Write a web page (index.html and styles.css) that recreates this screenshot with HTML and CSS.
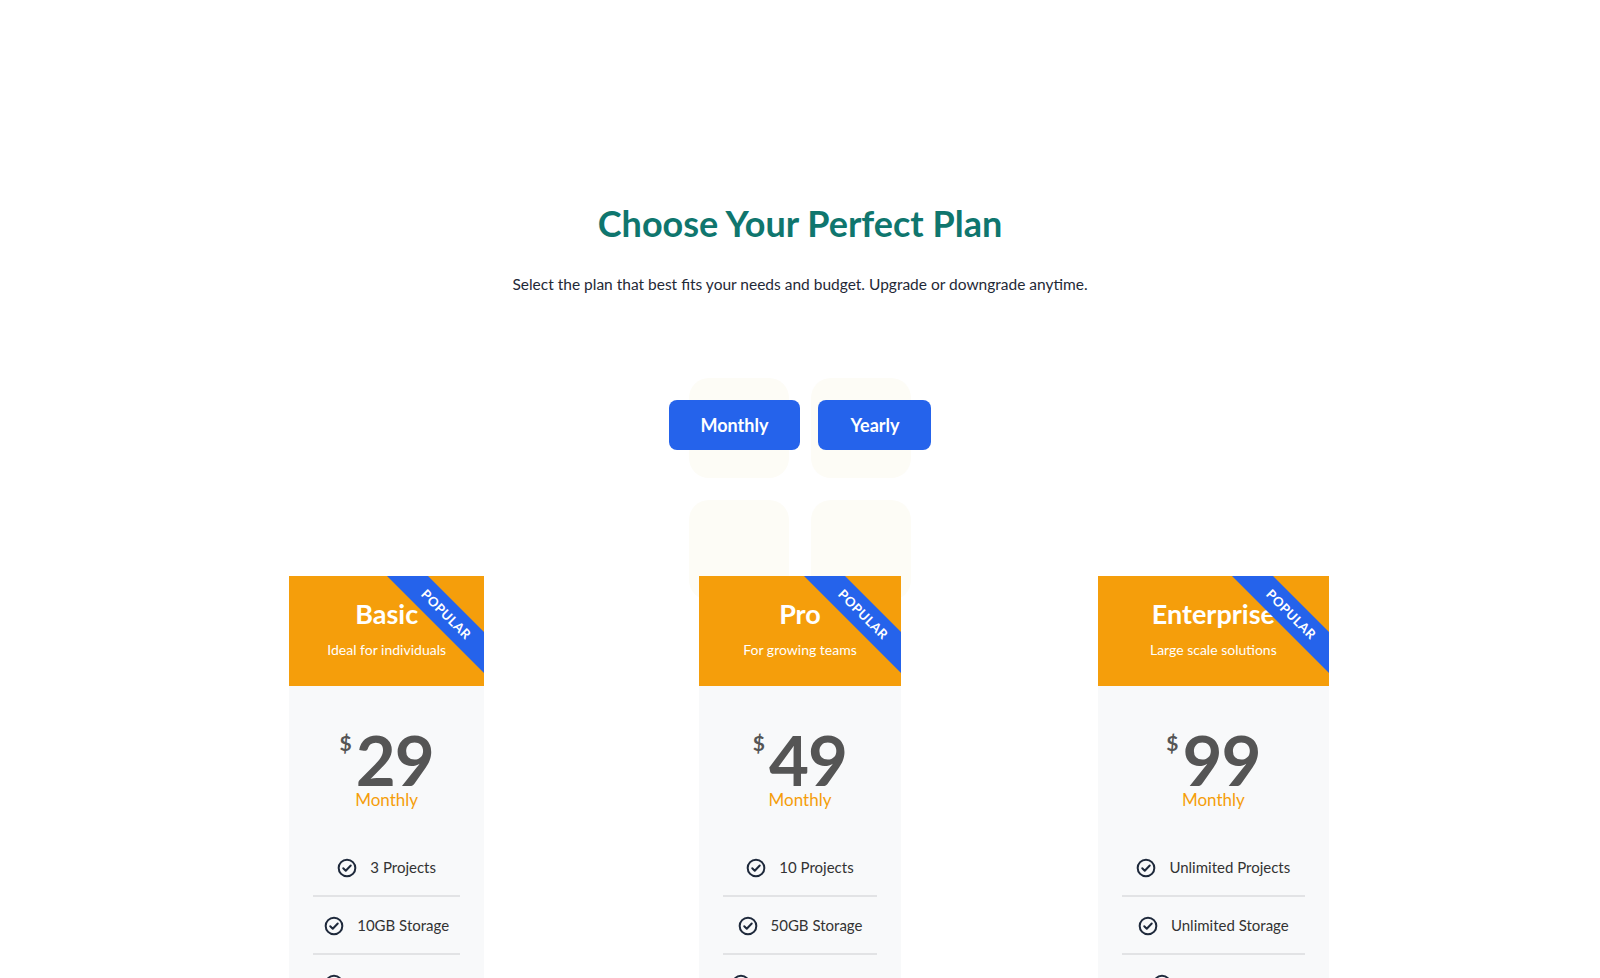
FILE: index.html
```html
<!DOCTYPE html>
<html lang="en">
<head>
    <meta charset="UTF-8">
    <meta name="viewport" content="width=device-width, initial-scale=1.0">
    <title>Pricing Plans</title>
    <link rel="stylesheet" href="styles.css">
</head>
<body>
    <section class="pricing">
        <h1 class="pricing-title">Choose Your Perfect Plan</h1>
        <p class="pricing-subtitle">Select the plan that best fits your needs and budget. Upgrade or downgrade anytime.</p>

        <div class="toggle-area">
            <div class="ghost-grid">
                <span></span><span></span><span></span><span></span>
            </div>
            <button class="toggle-btn">Monthly</button>
            <button class="toggle-btn">Yearly</button>
        </div>

        <div class="plans">
            <div class="plan plan-basic">
                <div class="plan-header">
                    <div class="ribbon">Popular</div>
                    <h2 class="plan-name">Basic</h2>
                    <p class="plan-desc">Ideal for individuals</p>
                </div>
                <div class="plan-body">
                    <div class="price"><span class="currency">$</span><span class="amount">29</span></div>
                    <div class="period">Monthly</div>
                    <ul class="features">
                        <li><svg viewBox="0 0 24 24"><circle cx="12" cy="12" r="10"/><path d="M7.5 12.3l3 3 6-6.3"/></svg>3 Projects</li>
                        <li><svg viewBox="0 0 24 24"><circle cx="12" cy="12" r="10"/><path d="M7.5 12.3l3 3 6-6.3"/></svg>10GB Storage</li>
                        <li><svg viewBox="0 0 24 24"><circle cx="12" cy="12" r="10"/><path d="M7.5 12.3l3 3 6-6.3"/></svg>Email Support</li>
                    </ul>
                </div>
            </div>

            <div class="plan plan-pro">
                <div class="plan-header">
                    <div class="ribbon">Popular</div>
                    <h2 class="plan-name">Pro</h2>
                    <p class="plan-desc">For growing teams</p>
                </div>
                <div class="plan-body">
                    <div class="price"><span class="currency">$</span><span class="amount">49</span></div>
                    <div class="period">Monthly</div>
                    <ul class="features">
                        <li><svg viewBox="0 0 24 24"><circle cx="12" cy="12" r="10"/><path d="M7.5 12.3l3 3 6-6.3"/></svg>10 Projects</li>
                        <li><svg viewBox="0 0 24 24"><circle cx="12" cy="12" r="10"/><path d="M7.5 12.3l3 3 6-6.3"/></svg>50GB Storage</li>
                        <li><svg viewBox="0 0 24 24"><circle cx="12" cy="12" r="10"/><path d="M7.5 12.3l3 3 6-6.3"/></svg>Priority Support</li>
                    </ul>
                </div>
            </div>

            <div class="plan plan-enterprise">
                <div class="plan-header">
                    <div class="ribbon">Popular</div>
                    <h2 class="plan-name">Enterprise</h2>
                    <p class="plan-desc">Large scale solutions</p>
                </div>
                <div class="plan-body">
                    <div class="price"><span class="currency">$</span><span class="amount">99</span></div>
                    <div class="period">Monthly</div>
                    <ul class="features">
                        <li><svg viewBox="0 0 24 24"><circle cx="12" cy="12" r="10"/><path d="M7.5 12.3l3 3 6-6.3"/></svg>Unlimited Projects</li>
                        <li><svg viewBox="0 0 24 24"><circle cx="12" cy="12" r="10"/><path d="M7.5 12.3l3 3 6-6.3"/></svg>Unlimited Storage</li>
                        <li><svg viewBox="0 0 24 24"><circle cx="12" cy="12" r="10"/><path d="M7.5 12.3l3 3 6-6.3"/></svg>24/7 Support</li>
                    </ul>
                </div>
            </div>
        </div>
    </section>
</body>
</html>
```

FILE: styles.css
```css
body {
    margin: 0;
    font-family: "Lato", "Noto Sans", sans-serif;
    background: #ffffff;
    color: #1f2937;
}

.pricing {
    padding-top: 202px;
    text-align: center;
}

.pricing-title {
    margin: 0;
    font-size: 36px;
    line-height: 1.2;
    font-weight: 700;
    color: #0f766e;
}

.pricing-subtitle {
    margin: 27px 0 0;
    font-size: 15.5px;
    line-height: 24px;
    color: #1f2937;
}

/* billing toggle */
.toggle-area {
    position: relative;
    display: flex;
    justify-content: center;
    gap: 18px;
    margin-top: 104px;
}

.ghost-grid {
    position: absolute;
    top: -22px;
    left: 50%;
    transform: translateX(-50%);
    display: grid;
    grid-template-columns: repeat(2, 100px);
    grid-auto-rows: 100px;
    gap: 22px;
    z-index: 0;
}

.ghost-grid span {
    background: #fdfcf6;
    border-radius: 20px;
}

.toggle-btn {
    position: relative;
    z-index: 1;
    height: 50px;
    padding: 0 32px;
    border: none;
    border-radius: 8px;
    background: #2563eb;
    color: #ffffff;
    font-family: inherit;
    font-size: 18px;
    font-weight: 700;
    cursor: pointer;
}

/* plan cards */
.plans {
    display: grid;
    grid-template-columns: repeat(3, 1fr);
    justify-items: center;
    align-items: start;
    width: 1240px;
    margin: 126px auto 0;
}

.plan {
    position: relative;
    z-index: 1;
    background: #f8f9fa;
}

.plan-basic { width: 195px; }
.plan-pro { width: 202px; }
.plan-enterprise { width: 231px; }

.plan-header {
    position: relative;
    overflow: hidden;
    height: 110px;
    box-sizing: border-box;
    padding: 22px 12px 0;
    background: #f59e0b;
    color: #ffffff;
}

.plan-name {
    margin: 0;
    font-size: 27px;
    line-height: 1.2;
    font-weight: 700;
}

.plan-desc {
    margin: 9px 0 0;
    font-size: 14px;
    line-height: 1.4;
}

.ribbon {
    position: absolute;
    top: 24px;
    right: -37px;
    width: 150px;
    height: 29px;
    line-height: 29px;
    background: #2563eb;
    color: #ffffff;
    font-size: 13px;
    font-weight: 700;
    letter-spacing: 0.5px;
    text-transform: uppercase;
    transform: rotate(45deg);
}

.plan-body {
    padding: 43px 24px 24px;
}

.price {
    display: flex;
    justify-content: center;
    align-items: flex-start;
    color: #555555;
}

.currency {
    font-size: 21px;
    line-height: 1;
    font-weight: 700;
    margin-top: 3px;
    margin-right: 4px;
}

.amount {
    font-size: 69px;
    line-height: 0.9;
    font-weight: 700;
    letter-spacing: -1px;
}

.period {
    margin-top: -2px;
    font-size: 17px;
    line-height: 22px;
    color: #f59e0b;
}

.features {
    list-style: none;
    margin: 28px 0 0;
    padding: 0;
}

.features li {
    display: flex;
    justify-content: center;
    align-items: center;
    padding: 16px 8px 15px;
    border-bottom: 2px solid #e2e3e5;
    font-size: 15px;
    line-height: 25px;
    color: #333333;
}

.features svg {
    width: 20px;
    height: 20px;
    margin-right: 13px;
    fill: none;
    stroke: #1e293b;
    stroke-width: 2.4;
    stroke-linecap: round;
    stroke-linejoin: round;
}
```
